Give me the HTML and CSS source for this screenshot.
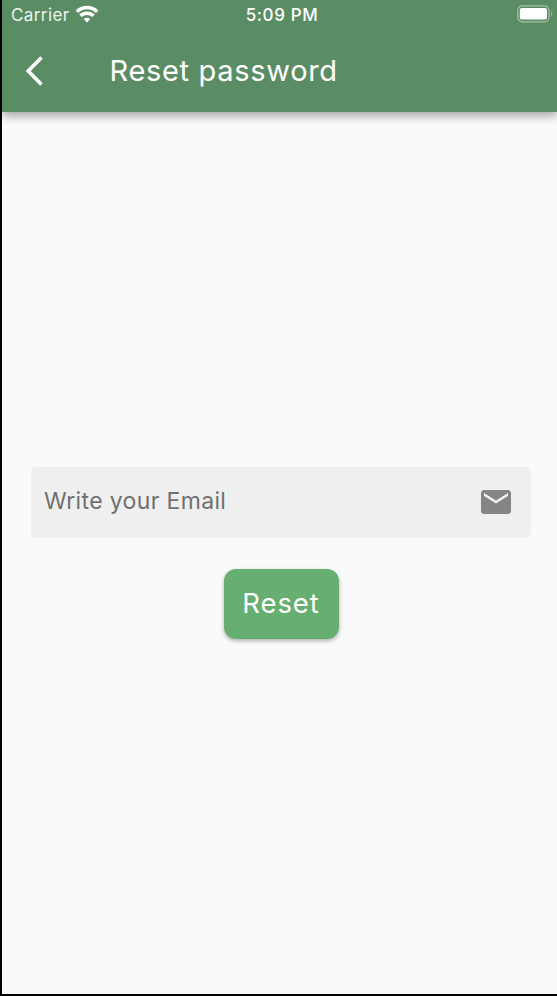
FILE: index.html
```html
<!DOCTYPE html>
<html lang="en">
<head>
<meta charset="utf-8">
<title>Reset password</title>
<link rel="stylesheet" href="styles.css">
</head>
<body>
<div class="screen">
  <header class="app-bar">
    <div class="status">
      <div class="carrier"><span class="carrier-name">Carrier</span>
        <svg class="wifi" width="24" height="18" viewBox="0 0 24 18" fill="none" stroke="#fff" stroke-width="3.5">
          <path d="M1.9 6.7C7.4 1.2 16.6 1.2 22.1 6.7M5.5 10.8c3.6-3.5 9.400-3.500 13 0"/>
          <path d="M12 17.400l-3.300-3.300c1.800-1.700 4.800-1.700 6.600 0z" fill="#fff" stroke="none"/>
        </svg>
      </div>
      <span class="time">5:09 PM</span>
      <svg class="battery" width="36" height="18" viewBox="0 0 36 18">
        <rect x="0.8" y="0.8" width="31.2" height="16" rx="4.5" fill="none" stroke="#fff" stroke-opacity=".45" stroke-width="1.2"/>
        <rect x="2.8" y="3" width="27.2" height="11.6" rx="2" fill="#fff"/>
        <path d="M34.3 6.2c1.3.7 1.3 4.5 0 5.2z" fill="#fff" fill-opacity=".5"/>
      </svg>
    </div>
    <div class="toolbar">
      <svg class="back" width="18" height="30" viewBox="0 0 18 30" fill="none" stroke="#fff" stroke-width="3.6"><path d="M16.5 1.5L3.200 15 16.500 28.500"/></svg>
      <h1 class="title">Reset password</h1>
    </div>
  </header>
  <main class="content">
    <div class="field">
      <span class="hint">Write your Email</span>
      <svg class="mail" width="30" height="24" viewBox="2 4 20 16" fill="#858585"><path d="M20 4H4c-1.100 0-1.990.9-1.990 2L2 18c0 1.100.9 2 2 2h16c1.100 0 2-.9 2-2V6c0-1.100-.9-2-2-2zm0 4l-8 5-8-5V6l8 5 8-5v2z"/></svg>
    </div>
    <button class="reset">Reset</button>
  </main>
</div>
</body>
</html>
```
FILE: styles.css
```css
* { box-sizing: border-box; }
body { margin: 0; background: #000; font-family: Inter, "Liberation Sans", sans-serif; }
.screen {
  height: 996px;
  border-left: 2px solid #000;
  border-bottom: 2px solid #000;
  background: #fafafa;
  display: flex;
  flex-direction: column;
  overflow: hidden;
}
.app-bar {
  height: 112px;
  flex: none;
  background: #5b8d65;
  color: #fff;
  box-shadow: 0 4px 9px rgba(0, 0, 0, .35);
}
.status {
  height: 29px;
  display: grid;
  grid-template-columns: 1fr auto 1fr;
  align-items: center;
  padding: 0 4px 1px 9px;
}
.carrier { display: flex; align-items: center; gap: 5px; }
.carrier-name { font-size: 17px; line-height: 22px; letter-spacing: .4px; color: #edf3ee; padding-top: 1px; }
.time { font-size: 17px; font-weight: 500; line-height: 22px; letter-spacing: .6px; padding-top: 1px; }
.battery { justify-self: end; }
.toolbar { height: 84px; display: flex; align-items: center; padding-left: 22.500px; }
.back { flex: none; }
.title { margin: 0 0 0 67px; font-size: 29px; font-weight: 400; letter-spacing: .68px; line-height: 36px; white-space: nowrap; }
.content { padding: 355px 26px 0 29px; display: flex; flex-direction: column; align-items: center; }
.field {
  width: 100%;
  height: 71px;
  border-radius: 5px;
  background: #efefef;
  display: flex;
  align-items: center;
  justify-content: space-between;
  padding: 0 20px 1px 13px;
}
.hint { font-size: 23px; line-height: 30px; color: #6f6f6f; letter-spacing: .35px; white-space: nowrap; padding-bottom: 3px; }
.reset {
  width: 115px;
  height: 70px;
  margin-top: 31px;
  padding: 0 0 2px;
  border: 0;
  border-radius: 12px;
  background: #66af70;
  color: #fff;
  font: 400 27.5px/34px Inter, "Liberation Sans", sans-serif;
  letter-spacing: .9px;
  box-shadow: 0 2px 4px rgba(0, 0, 0, .3);
}
```
